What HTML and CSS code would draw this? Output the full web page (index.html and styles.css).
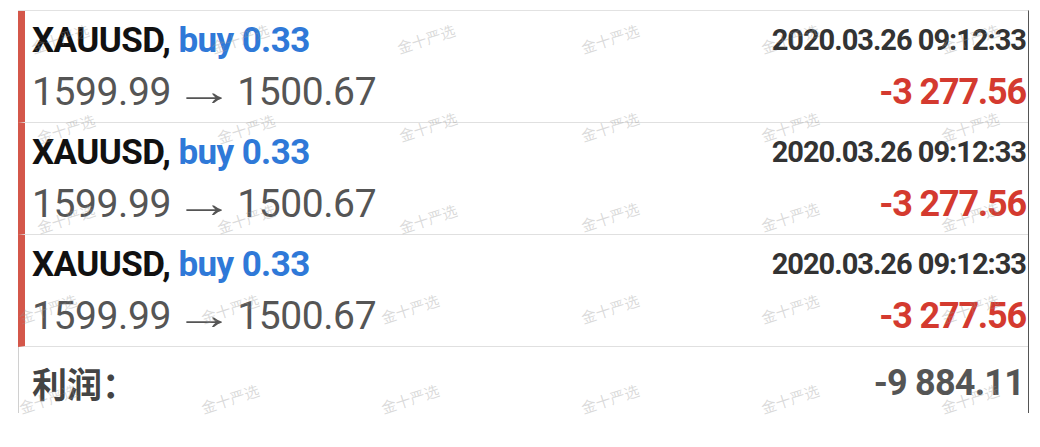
FILE: index.html
```html
<!DOCTYPE html>
<html lang="zh">
<head>
<meta charset="utf-8">
<title>Orders</title>
<link rel="stylesheet" href="styles.css">
</head>
<body>
<div class="panel">
  <div class="trade">
    <div class="line">
      <span class="symbol">XAUUSD, <span class="side">buy 0.33</span></span>
      <span class="time">2020.03.26 09:12:33</span>
    </div>
    <div class="line">
      <span class="prices">1599.99 <span class="arrow">→</span> 1500.67</span>
      <span class="profit">-3 277.56</span>
    </div>
  </div>
  <div class="trade">
    <div class="line">
      <span class="symbol">XAUUSD, <span class="side">buy 0.33</span></span>
      <span class="time">2020.03.26 09:12:33</span>
    </div>
    <div class="line">
      <span class="prices">1599.99 <span class="arrow">→</span> 1500.67</span>
      <span class="profit">-3 277.56</span>
    </div>
  </div>
  <div class="trade">
    <div class="line">
      <span class="symbol">XAUUSD, <span class="side">buy 0.33</span></span>
      <span class="time">2020.03.26 09:12:33</span>
    </div>
    <div class="line">
      <span class="prices">1599.99 <span class="arrow">→</span> 1500.67</span>
      <span class="profit">-3 277.56</span>
    </div>
  </div>
  <div class="total">
    <span class="total-label">利润：</span>
    <span class="total-value">-9 884.11</span>
  </div>
</div>
<div class="wm" style="left:30px;top:28px">金十严选</div>
<div class="wm" style="left:210px;top:28px">金十严选</div>
<div class="wm" style="left:396px;top:28px">金十严选</div>
<div class="wm" style="left:580px;top:28px">金十严选</div>
<div class="wm" style="left:760px;top:28px">金十严选</div>
<div class="wm" style="left:940px;top:28px">金十严选</div>
<div class="wm" style="left:36px;top:118px">金十严选</div>
<div class="wm" style="left:216px;top:118px">金十严选</div>
<div class="wm" style="left:398px;top:116px">金十严选</div>
<div class="wm" style="left:580px;top:116px">金十严选</div>
<div class="wm" style="left:760px;top:116px">金十严选</div>
<div class="wm" style="left:940px;top:116px">金十严选</div>
<div class="wm" style="left:36px;top:208px">金十严选</div>
<div class="wm" style="left:216px;top:208px">金十严选</div>
<div class="wm" style="left:398px;top:208px">金十严选</div>
<div class="wm" style="left:580px;top:206px">金十严选</div>
<div class="wm" style="left:760px;top:206px">金十严选</div>
<div class="wm" style="left:940px;top:206px">金十严选</div>
<div class="wm" style="left:18px;top:298px">金十严选</div>
<div class="wm" style="left:200px;top:298px">金十严选</div>
<div class="wm" style="left:380px;top:298px">金十严选</div>
<div class="wm" style="left:580px;top:298px">金十严选</div>
<div class="wm" style="left:760px;top:298px">金十严选</div>
<div class="wm" style="left:940px;top:298px">金十严选</div>
<div class="wm" style="left:18px;top:388px">金十严选</div>
<div class="wm" style="left:200px;top:388px">金十严选</div>
<div class="wm" style="left:380px;top:388px">金十严选</div>
<div class="wm" style="left:580px;top:388px">金十严选</div>
<div class="wm" style="left:760px;top:388px">金十严选</div>
<div class="wm" style="left:940px;top:388px">金十严选</div>
</body>
</html>
```
FILE: styles.css
```css
html, body {
  margin: 0;
  padding: 0;
  background: #ffffff;
}
body {
  font-family: Roboto, "Liberation Sans", "Noto Sans CJK SC", sans-serif;
  position: relative;
  width: 1040px;
  height: 447px;
  overflow: hidden;
}
.panel {
  margin: 10px 0 0 18px;
  width: 1010px;
  border-top: 1px solid #e2e2e2;
  border-right: 1px solid #555555;
  display: flex;
  flex-direction: column;
}
.trade {
  border-left: 7px solid #d4574a;
  border-bottom: 1px solid #e0e0e0;
  padding: 3px 2px 4px 7px;
  display: flex;
  flex-direction: column;
}
.line {
  height: 52px;
  display: flex;
  justify-content: space-between;
  align-items: center;
}
.symbol {
  font-weight: 700;
  font-size: 35px;
  color: #111111;
  letter-spacing: -0.6px;
}
.side {
  color: #2f79d8;
}
.time {
  font-weight: 700;
  font-size: 29px;
  color: #333333;
  letter-spacing: -1px;
}
.prices {
  font-size: 39px;
  color: #555555;
  letter-spacing: -0.4px;
}
.arrow {
  font-family: "Liberation Sans", sans-serif;
  font-size: 40px;
  display: inline-block;
  margin: 0 4px;
  transform: scaleX(1.5);
}
.profit {
  font-weight: 700;
  font-size: 36px;
  color: #d43a2f;
  letter-spacing: -1.2px;
}
.total {
  height: 66px;
  border-left: 1px solid #d0d0d0;
  padding: 5px 4px 0 13px;
  box-sizing: border-box;
  display: flex;
  justify-content: space-between;
  align-items: center;
}
.total-label {
  font-family: "Noto Sans CJK SC", sans-serif;
  font-weight: 700;
  font-size: 35px;
  color: #444444;
}
.total-value {
  font-weight: 700;
  font-size: 36px;
  color: #555555;
  letter-spacing: -0.8px;
}
.wm {
  position: absolute;
  font-family: "Noto Sans CJK SC", sans-serif;
  font-size: 15px;
  color: rgba(150, 150, 150, 0.35);
  transform: rotate(-18deg);
  white-space: nowrap;
  pointer-events: none;
}
```
